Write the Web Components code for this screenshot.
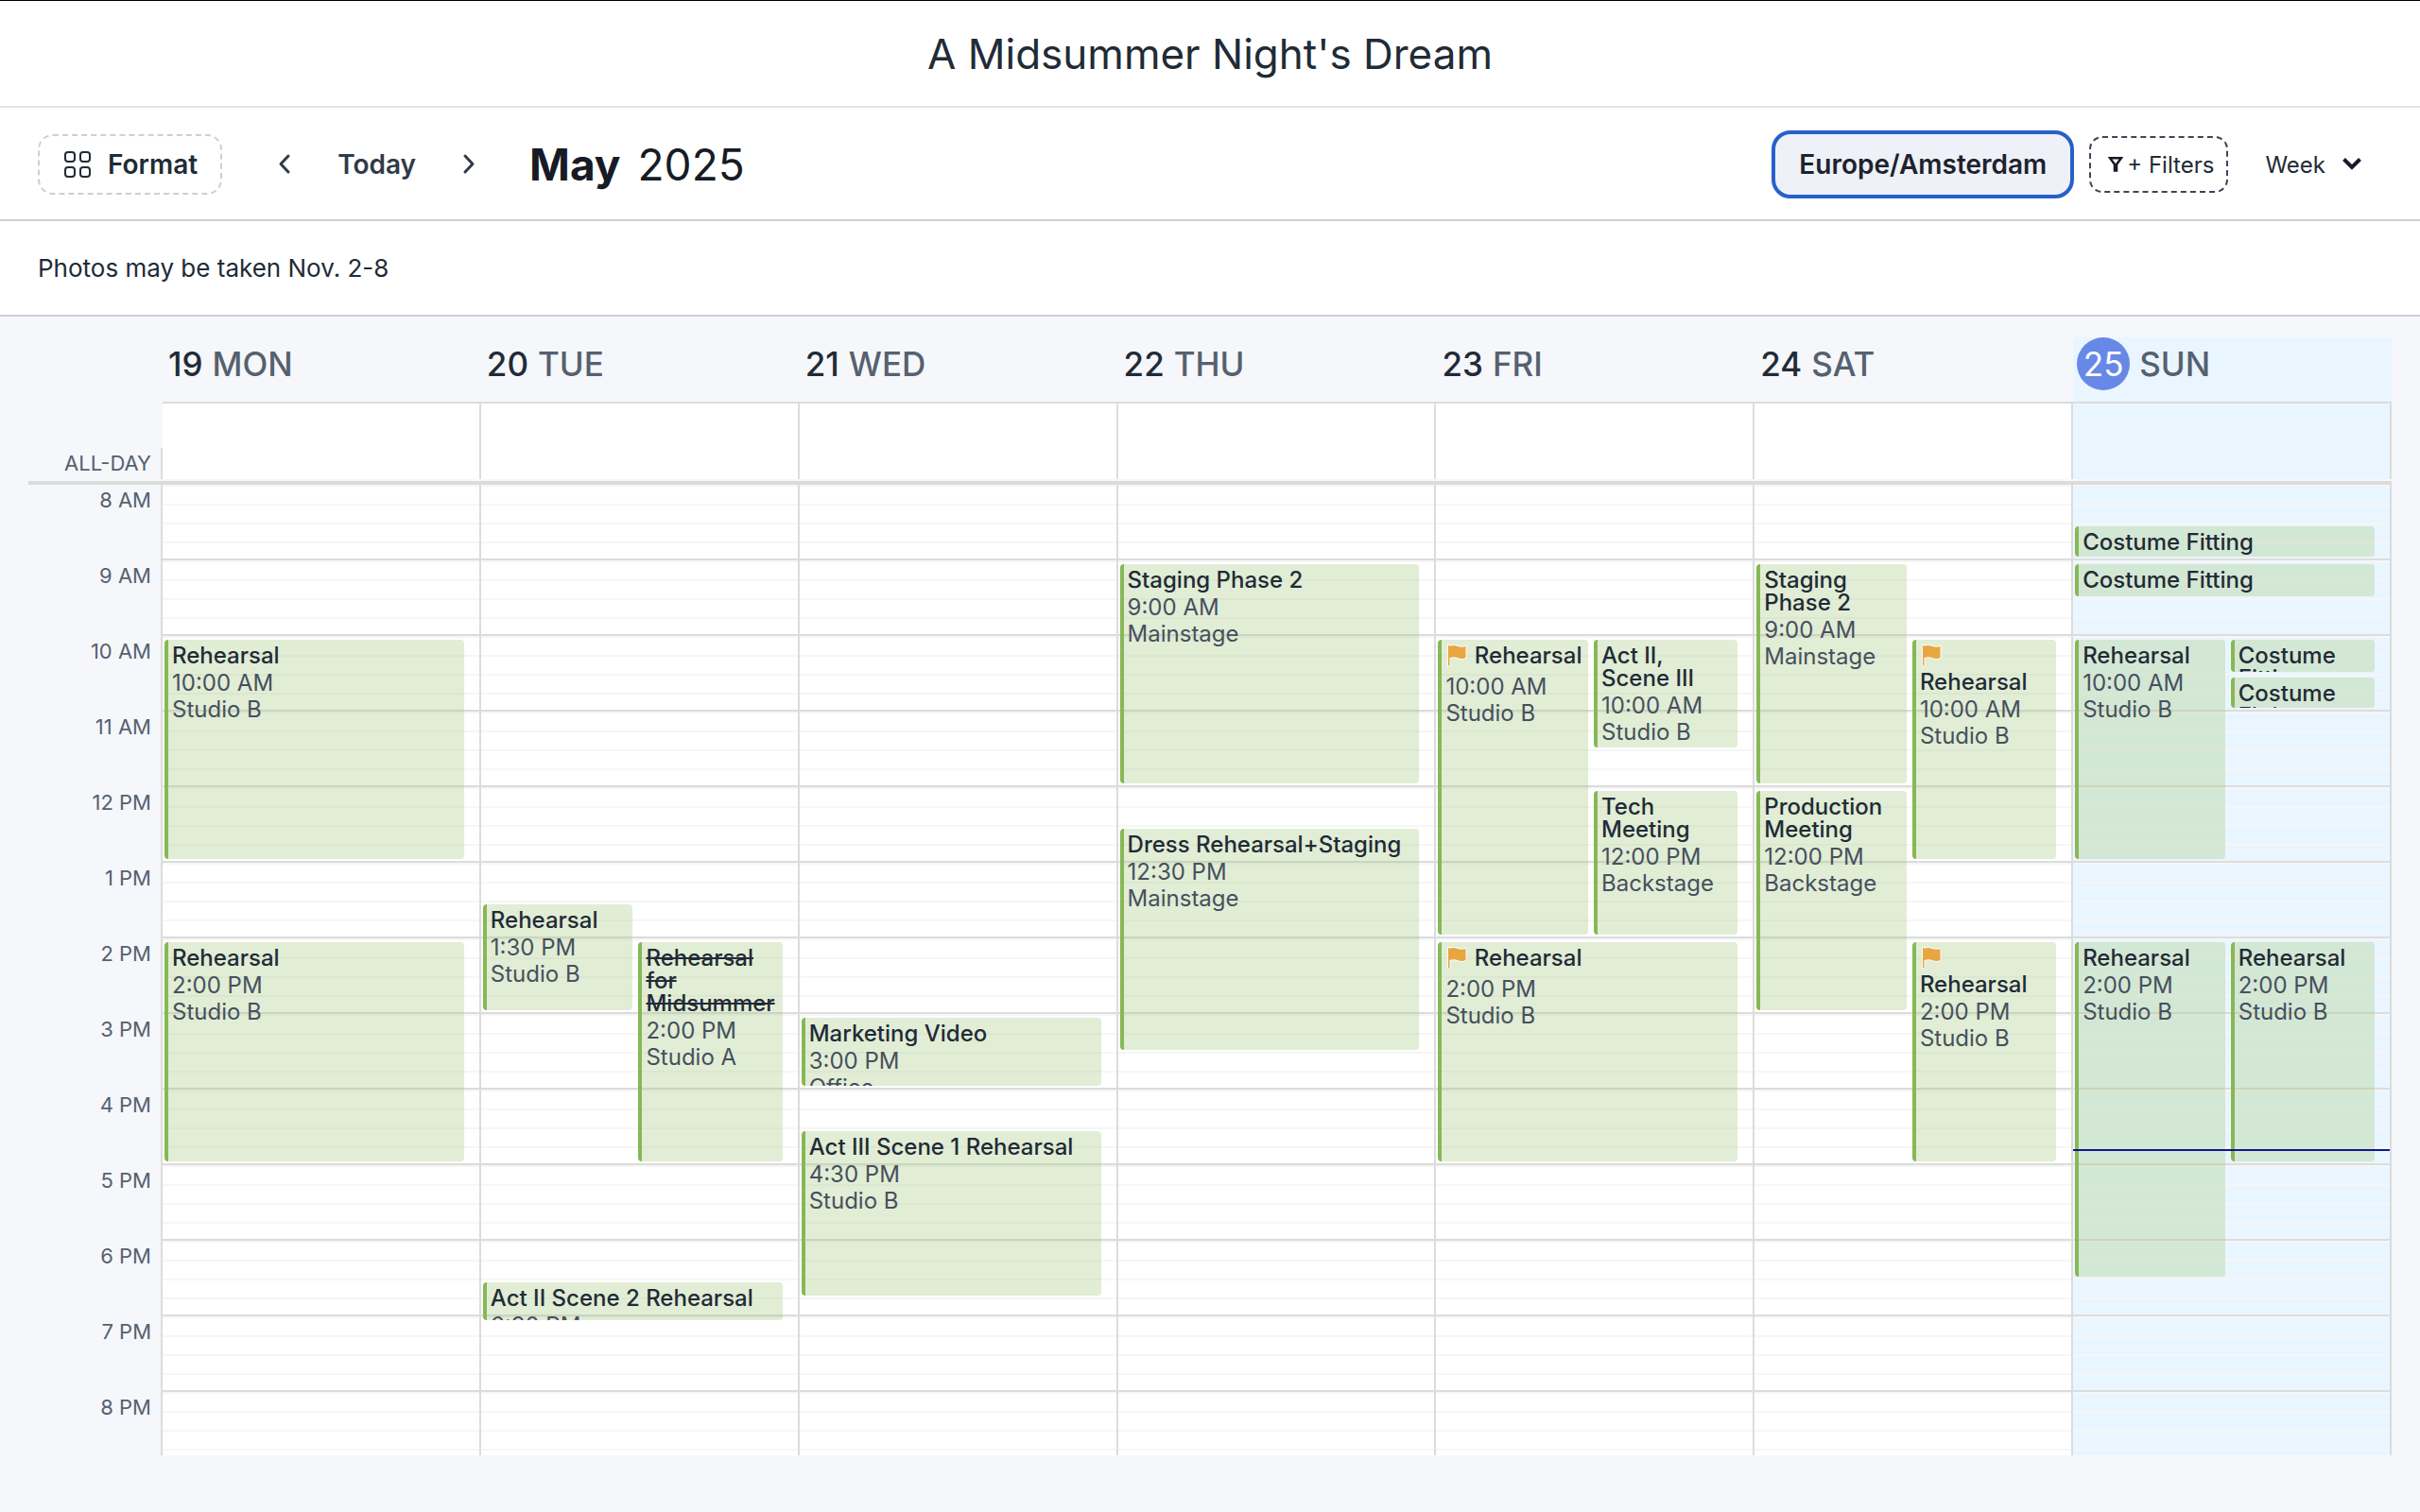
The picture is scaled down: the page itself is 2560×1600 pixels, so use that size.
<!DOCTYPE html>
<html lang="en">
<head>
<meta charset="utf-8">
<meta name="viewport" content="width=device-width, initial-scale=1">
<title>A Midsummer Night's Dream</title>
<style>
  body {
    margin: 0;
    background: #f5f7fb;
    color: #212b36;
    font-family: Inter, "Liberation Sans", sans-serif;
  }
</style>
</head>
<body>
<schedule-page></schedule-page>

<script>
const week = [
  { num: 19, name: 'MON', events: [
    { title: 'Rehearsal', time: '10:00 AM', place: 'Studio B', start: 10, end: 13 },
    { title: 'Rehearsal', time: '2:00 PM', place: 'Studio B', start: 14, end: 17 }
  ] },
  { num: 20, name: 'TUE', events: [
    { title: 'Rehearsal', time: '1:30 PM', place: 'Studio B', start: 13.5, end: 15, lane: 1 },
    { title: 'Rehearsal for Midsummer', time: '2:00 PM', place: 'Studio A', start: 14, end: 17, lane: 2, cancelled: true },
    { title: 'Act II Scene 2 Rehearsal', time: '6:30 PM', place: 'Studio B', start: 18.5, end: 19.075 }
  ] },
  { num: 21, name: 'WED', events: [
    { title: 'Marketing Video', time: '3:00 PM', place: 'Office', start: 15, end: 16 },
    { title: 'Act III Scene 1 Rehearsal', time: '4:30 PM', place: 'Studio B', start: 16.5, end: 18.75 }
  ] },
  { num: 22, name: 'THU', events: [
    { title: 'Staging Phase 2', time: '9:00 AM', place: 'Mainstage', start: 9, end: 12 },
    { title: 'Dress Rehearsal+Staging', time: '12:30 PM', place: 'Mainstage', start: 12.5, end: 15.5 }
  ] },
  { num: 23, name: 'FRI', events: [
    { title: 'Rehearsal', time: '10:00 AM', place: 'Studio B', start: 10, end: 14, lane: 1, flag: true },
    { title: 'Act II, Scene III', time: '10:00 AM', place: 'Studio B', start: 10, end: 11.5, lane: 2 },
    { title: 'Tech Meeting', time: '12:00 PM', place: 'Backstage', start: 12, end: 14, lane: 2 },
    { title: 'Rehearsal', time: '2:00 PM', place: 'Studio B', start: 14, end: 17, flag: true }
  ] },
  { num: 24, name: 'SAT', events: [
    { title: 'Staging Phase 2', time: '9:00 AM', place: 'Mainstage', start: 9, end: 12, lane: 1 },
    { title: 'Rehearsal', time: '10:00 AM', place: 'Studio B', start: 10, end: 13, lane: 2, flag: true },
    { title: 'Production Meeting', time: '12:00 PM', place: 'Backstage', start: 12, end: 15, lane: 1 },
    { title: 'Rehearsal', time: '2:00 PM', place: 'Studio B', start: 14, end: 17, lane: 2, flag: true }
  ] },
  { num: 25, name: 'SUN', today: true, events: [
    { title: 'Costume Fitting', start: 8.5, end: 9 },
    { title: 'Costume Fitting', start: 9, end: 9.5 },
    { title: 'Rehearsal', time: '10:00 AM', place: 'Studio B', start: 10, end: 13, lane: 1 },
    { title: 'Costume Fitting', start: 10, end: 10.5, lane: 2 },
    { title: 'Costume Fitting', start: 10.5, end: 11, lane: 2 },
    { title: 'Rehearsal', time: '2:00 PM', place: 'Studio B', start: 14, end: 18.5, lane: 1 },
    { title: 'Rehearsal', time: '2:00 PM', place: 'Studio B', start: 14, end: 17, lane: 2 }
  ] }
];

const FIRST_HOUR = 8;
const HOURS = 13;
// one grid row is 2px, so an hour is 40 rows
const ROWS_PER_HOUR = 40;

class SchedulePage extends HTMLElement {
  constructor() {
    super();
    this.attachShadow({ mode: 'open' });
  }

  connectedCallback() {
    this.shadowRoot.innerHTML = `
      <style>
        :host {
          display: flex;
          flex-direction: column;
          height: 100vh;
          box-sizing: border-box;
          border-top: 1px solid #000;
          overflow: hidden;
        }
        h1 {
          margin: 0;
          padding: 28px 0 27px;
          background: #fff;
          border-bottom: 2px solid #e4e5ea;
          font-size: 44px;
          line-height: 56px;
          font-weight: 400;
          text-align: center;
        }
        .note {
          margin: 0;
          padding: 32px 40px 31px;
          background: #fff;
          border-bottom: 2px solid #cbd0d8;
          font-size: 26px;
          line-height: 36px;
        }
        week-grid { flex: 1; min-height: 0; }
      </style>
      <h1>A Midsummer Night's Dream</h1>
      <calendar-toolbar month="May" year="2025" zone="Europe/Amsterdam"></calendar-toolbar>
      <p class="note">Photos may be taken Nov. 2-8</p>
      <week-grid></week-grid>
    `;
  }
}

class CalendarToolbar extends HTMLElement {
  constructor() {
    super();
    this.attachShadow({ mode: 'open' });
  }

  connectedCallback() {
    this.shadowRoot.innerHTML = `
      <style>
        :host {
          display: flex;
          align-items: center;
          justify-content: space-between;
          padding: 24px 40px 22px;
          background: #fff;
          border-bottom: 2px solid #cbd0d8;
        }
        .group { display: flex; align-items: center; }
        button, select {
          box-sizing: border-box;
          margin: 0;
          border: 0;
          background: none;
          color: inherit;
          font: inherit;
          cursor: pointer;
        }
        svg { display: block; flex: none; fill: none; stroke: currentColor; }
        .format {
          display: flex;
          align-items: center;
          gap: 16px;
          height: 64px;
          padding: 0 24px;
          border: 2px dashed #c9d0da;
          border-radius: 16px;
          font-size: 28px;
          font-weight: 600;
        }
        .nav {
          display: flex;
          align-items: center;
          padding: 0 48px 0 50px;
          color: #303a4a;
        }
        .arrow { padding: 12px 8px; }
        .today {
          padding: 0 40px;
          font-size: 28px;
          font-weight: 600;
        }
        h2 {
          display: flex;
          gap: 18px;
          margin: 0;
          color: #171b26;
          font-size: 46px;
          line-height: 60px;
          font-weight: 400;
        }
        h2 b { font-weight: 700; }
        .zone {
          height: 72px;
          padding: 0 25px;
          border: 4px solid #2860cb;
          border-radius: 20px;
          background: #eef1f7;
          color: #1d222e;
          font-size: 28px;
          font-weight: 600;
        }
        .filters {
          display: flex;
          align-items: center;
          gap: 4px;
          height: 60px;
          margin-left: 16px;
          padding: 0 13px 0 18px;
          border: 2px dashed #3c4656;
          border-radius: 14px;
          font-size: 24px;
        }
        .filters svg, .view svg { color: #171b26; }
        .view {
          display: flex;
          align-items: center;
          gap: 16px;
          padding: 0 20px 0 39px;
          font-size: 24px;
        }
        .view select {
          appearance: none;
          field-sizing: content;
          padding: 0;
        }
      </style>
      <div class="group">
        <button class="format" type="button">
          <svg width="32" height="32" viewBox="0 0 32 32" stroke-width="2">
            <rect x="3" y="3" width="10" height="10" rx="3"/>
            <rect x="19" y="3" width="10" height="10" rx="3"/>
            <rect x="3" y="19" width="10" height="10" rx="3"/>
            <rect x="19" y="19" width="10" height="10" rx="3"/>
          </svg>
          Format
        </button>
        <div class="nav">
          <button class="arrow" type="button" aria-label="Previous week">
            <svg width="16" height="24" viewBox="0 0 16 24" stroke-width="3" stroke-linecap="round" stroke-linejoin="round"><path d="m12 3-8 8.500 8 8.500"/></svg>
          </button>
          <button class="today" type="button">Today</button>
          <button class="arrow" type="button" aria-label="Next week">
            <svg width="16" height="24" viewBox="0 0 16 24" stroke-width="3" stroke-linecap="round" stroke-linejoin="round"><path d="m4 3 8 8.500-8 8.500"/></svg>
          </button>
        </div>
        <h2><b>${this.getAttribute('month')}</b> <span>${this.getAttribute('year')}</span></h2>
      </div>
      <div class="group">
        <button class="zone" type="button">${this.getAttribute('zone')}</button>
        <button class="filters" type="button">
          <svg width="16" height="18" viewBox="0 0 16 18" stroke-width="2.500"><path d="M2 2.200h12L9 9v6.500H7V9z"/></svg>
          + Filters
        </button>
        <label class="view">
          <select aria-label="View"><option>Week</option><option>Day</option></select>
          <svg width="24" height="24" viewBox="0 0 24 24" stroke-width="4"><path d="m3.500 6.500 8.500 8.500 8.500-8.500"/></svg>
        </label>
      </div>
    `;
  }
}

class WeekGrid extends HTMLElement {
  constructor() {
    super();
    this.attachShadow({ mode: 'open' });
  }

  hourLabel(hour) {
    return hour < 12 ? hour + ' AM' : (hour > 12 ? hour - 12 : 12) + ' PM';
  }

  connectedCallback() {
    const hours = Array.from({ length: HOURS }, (_, i) => this.hourLabel(FIRST_HOUR + i));

    this.shadowRoot.innerHTML = `
      <style>
        :host {
          display: flex;
          flex-direction: column;
          padding: 22px 30px 60px;
        }
        .row {
          display: grid;
          grid-template-columns: 142px repeat(7, minmax(0, 1fr));
        }
        .heads > div {
          display: flex;
          align-items: center;
          gap: 10px;
          height: 68px;
          padding: 0 0 12px 6px;
          box-sizing: border-box;
          font-size: 35px;
          font-weight: 500;
        }
        .heads > div + div { border-bottom: 2px solid #dcdcdc; height: 70px; }
        .heads .name { color: #56616e; }
        .heads .now { background: #eaf6ff; padding-left: 4px; }
        .now .num {
          width: 56px;
          line-height: 56px;
          border-radius: 50%;
          background: #6888e8;
          color: #fff;
          text-align: center;
          font-weight: 400;
        }
        .allday { padding-bottom: 2px; border-bottom: 4px solid #dcdcdc; }
        .allday > div { height: 80px; box-sizing: border-box; }
        .allday .cell { background: #fff; border-right: 2px solid #dcdcdc; }
        .allday .cell.now { background: #eaf6ff; }
        .allday .label { display: flex; align-items: flex-end; }
        .label span {
          flex: 1;
          padding-right: 10px;
          border-right: 2px solid #dcdcdc;
          line-height: 33px;
        }
        .label, .hours {
          color: #56616e;
          font-size: 22px;
          text-align: right;
        }
        .body { flex: 1; min-height: 0; overflow: hidden; }
        .hours { border-right: 2px solid #dcdcdc; }
        .hours div {
          height: 80px;
          padding-right: 10px;
          line-height: 32px;
        }
      </style>
      <div class="row heads">
        <div></div>
        ${week.map(d => `<div class="${d.today ? 'now' : ''}"><span class="num">${d.num}</span><span class="name">${d.name}</span></div>`).join('')}
      </div>
      <div class="row allday">
        <div class="label"><span>ALL-DAY</span></div>
        ${week.map(d => `<div class="cell ${d.today ? 'now' : ''}"></div>`).join('')}
      </div>
      <div class="row body">
        <div class="hours">${hours.map(h => `<div>${h}</div>`).join('')}</div>
        ${week.map((d, i) => `<day-column index="${i}" ${d.today ? 'today' : ''}></day-column>`).join('')}
      </div>
    `;
  }
}

class DayColumn extends HTMLElement {
  constructor() {
    super();
    this.attachShadow({ mode: 'open' });
  }

  // rows leave a little air above and below each event
  place(e) {
    const from = Math.round((e.start - FIRST_HOUR) * ROWS_PER_HOUR) + 3;
    const to = Math.round((e.end - FIRST_HOUR) * ROWS_PER_HOUR) + (e.end % 1 ? 0 : -1);
    const lanes = e.lane === 1 ? '1' : e.lane === 2 ? '2' : '1 / 3';
    return `grid-row: ${from} / ${to}; grid-column: ${lanes}`;
  }

  connectedCallback() {
    const day = week[this.getAttribute('index')];

    this.shadowRoot.innerHTML = `
      <style>
        :host {
          display: grid;
          grid-template-columns: minmax(0, 25fr) minmax(0, 24fr);
          grid-template-rows: repeat(${HOURS * ROWS_PER_HOUR}, 2px);
          column-gap: 6px;
          position: relative;
          padding: 0 16px 0 2px;
          border-right: 2px solid #dcdcdc;
          background:
            repeating-linear-gradient(transparent 0 78px, #dcdcdc 78px 80px),
            repeating-linear-gradient(#f6f6f6 0 2px, transparent 2px 20px),
            #fff;
        }
        :host([today]) {
          background:
            repeating-linear-gradient(transparent 0 78px, #dcdcdc 78px 80px),
            repeating-linear-gradient(#f6f6f6 0 2px, transparent 2px 20px),
            #eaf6ff;
        }
        .clock {
          position: absolute;
          left: 0;
          right: 0;
          top: 703px;
          height: 2px;
          background: #0c1a8c;
        }
      </style>
      ${day.events.map(e => `
        <calendar-event style="${this.place(e)}" ${e.cancelled ? 'cancelled' : ''} ${e.flag ? 'flag' : ''}>
          ${e.title}
          ${e.time ? `<span slot="time">${e.time}</span><span slot="place">${e.place}</span>` : ''}
        </calendar-event>`).join('')}
      ${day.today ? '<div class="clock"></div>' : ''}
    `;
  }
}

class CalendarEvent extends HTMLElement {
  constructor() {
    super();
    this.attachShadow({ mode: 'open' });
  }

  connectedCallback() {
    const flag = this.hasAttribute('flag')
      ? `<svg width="24" height="28" viewBox="0 0 24 28"><path d="M3 1h1.500v1c3-1.500 6-1 8.500 0s6 1 8.500 0v12c-3 1.500-6 1-8.500 0s-5.500-1-8.500 0v8.500H3z" fill="#e8a640" stroke="#fffaf0" stroke-width="2" paint-order="stroke"/></svg> `
      : '';

    this.shadowRoot.innerHTML = `
      <style>
        :host {
          display: block;
          box-sizing: border-box;
          min-width: 0;
          overflow: hidden;
          padding: 5px 2px 0 4px;
          border-left: 4px solid #86b856;
          border-radius: 4px;
          background: rgba(165, 200, 127, 0.33);
          font-size: 24px;
        }
        .title {
          margin-bottom: 3px;
          line-height: 24px;
          font-weight: 500;
        }
        :host([cancelled]) .title { text-decoration: line-through; }
        .meta {
          display: flex;
          flex-direction: column;
          color: #46505e;
          line-height: 28px;
        }
        svg { vertical-align: -8px; }
      </style>
      <div class="title">${flag}<slot></slot></div>
      <div class="meta"><slot name="time"></slot><slot name="place"></slot></div>
    `;
  }
}

customElements.define('calendar-event', CalendarEvent);
customElements.define('day-column', DayColumn);
customElements.define('week-grid', WeekGrid);
customElements.define('calendar-toolbar', CalendarToolbar);
customElements.define('schedule-page', SchedulePage);
</script>
</body>
</html>
